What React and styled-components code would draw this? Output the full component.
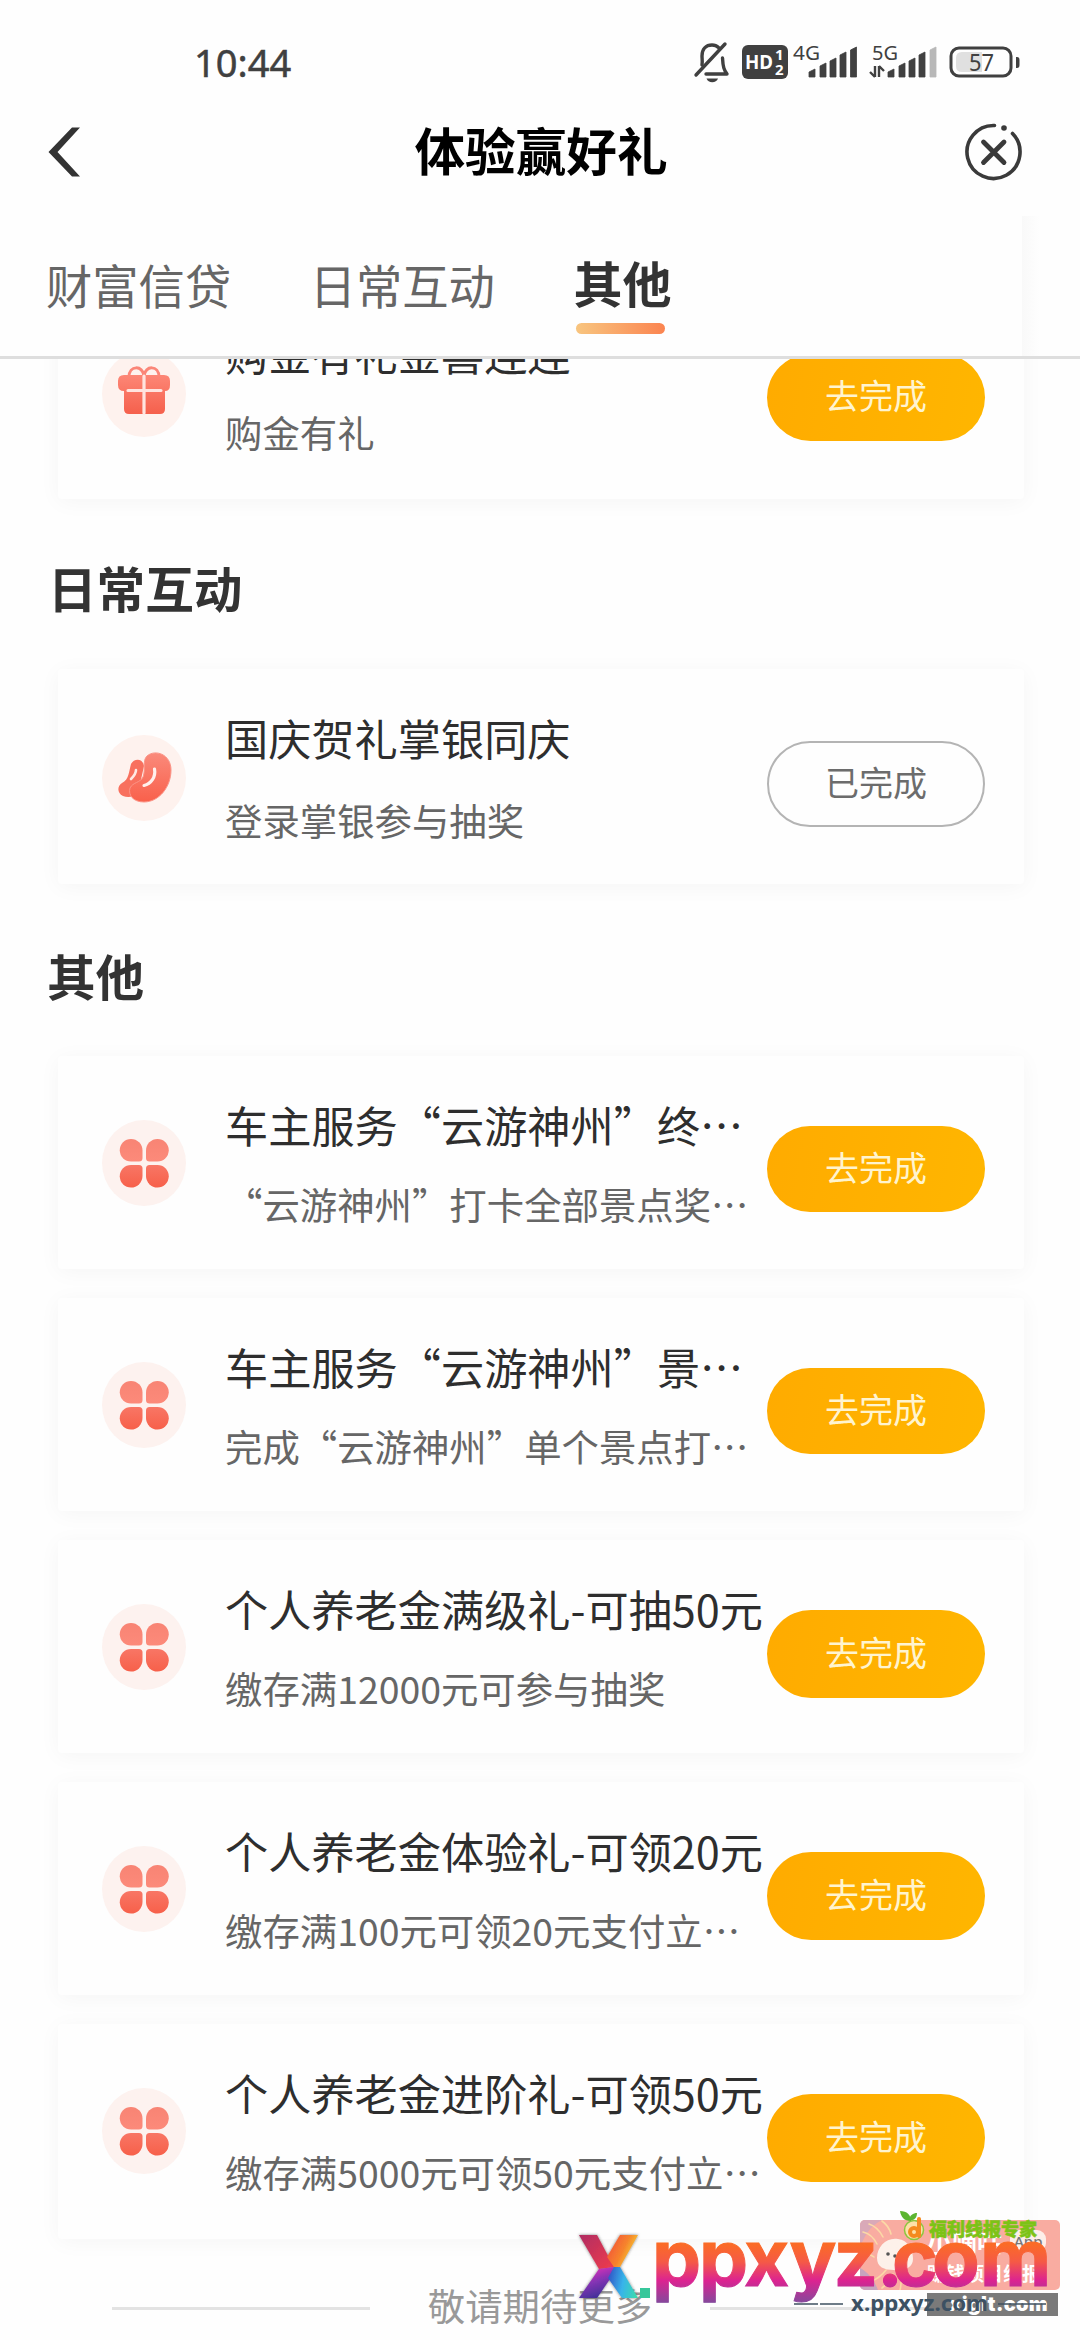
import React from "react";
import styled, { createGlobalStyle } from "styled-components";

const GlobalStyle = createGlobalStyle`
  * { box-sizing: border-box; }
  html, body { margin: 0; padding: 0; background: #fefefe; }
  body {
    font-family: "Noto Sans CJK SC", "Noto Sans", sans-serif;
    color: #333;
  }
`;

const Screen = styled.div`
  position: relative;
  display: flex;
  flex-direction: column;
  width: 1080px;
  height: 2340px;
  overflow: hidden;
  background: #fefefe;
`;

/* ---------- status bar ---------- */

const StatusBar = styled.div`
  display: flex;
  align-items: center;
  justify-content: space-between;
  height: 124px;
  padding: 0 60px 0 194px;
  flex: none;
`;

const Clock = styled.span`
  font: 400 38px/50px "Noto Sans", sans-serif;
  color: #404040;
  -webkit-text-stroke: 0.5px #404040;
`;

const StatusIcons = styled.div`
  display: flex;
  align-items: center;
`;

const StatusSvg = styled.svg`
  display: block;
  overflow: visible;
  font-family: "Noto Sans", sans-serif;
`;

/* ---------- title bar ---------- */

const NavBar = styled.header`
  display: grid;
  grid-template-columns: 60px 1fr 60px;
  align-items: center;
  height: 58px;
  padding: 0 56px 0 47px;
  flex: none;
`;

const NavTitle = styled.h1`
  margin: -8px 0 0;
  padding-left: 11px;
  text-align: center;
  font-size: 50.6px;
  line-height: 58px;
  font-weight: 700;
  color: #000;
`;

const NavIcon = styled.svg`
  display: block;
  margin-top: -2px;
  justify-self: ${(p) => p.$side};
`;

/* ---------- tabs ---------- */

const Tabs = styled.nav`
  display: flex;
  gap: 78.5px;
  height: 177px;
  padding: 66px 0 0 46px;
  flex: none;
  border-bottom: 3px solid #dedede;
  background: linear-gradient(90deg, #f9f9f9, #fefefe) 1022px 34px / 18px 144px no-repeat, #fefefe;
`;

const Tab = styled.div`
  display: flex;
  flex-direction: column;
  align-items: center;
  font-size: ${(p) => (p.$active ? "49px" : "46.3px")};
  font-weight: ${(p) => (p.$active ? 700 : 400)};
  line-height: ${(p) => (p.$active ? "68px" : "72px")};
  color: ${(p) => (p.$active ? "#333" : "#666")};
  white-space: nowrap;
`;

const TabMark = styled.span`
  width: 89px;
  height: 11px;
  margin: 7px 4px 0 0;
  border-radius: 6px;
  background: linear-gradient(90deg, #f8c57f, #fb8450);
`;

/* ---------- task list ---------- */

const Content = styled.main`
  flex: 1;
  min-height: 0;
  overflow: hidden;
`;

const List = styled.div`
  display: flex;
  flex-direction: column;
  gap: 29px;
  padding: 0 56px 0 58px;
  margin-top: ${(p) => p.$offset || 0}px;
`;

const SectionTitle = styled.h2`
  margin: 0;
  padding: ${(p) => p.$pad};
  font-size: 48.6px;
  line-height: 70px;
  font-weight: 700;
  color: #333;
`;

const Card = styled.section`
  display: flex;
  align-items: flex-start;
  height: ${(p) => p.$height || 213}px;
  padding: 0 39px 0 44px;
  border-radius: 4px;
  background: #fefefe;
  box-shadow: 0 3px 22px rgba(0, 0, 0, 0.04);
`;

const TaskIcon = styled.svg`
  display: block;
  flex: none;
  width: 84px;
  height: 86px;
  margin-top: ${(p) => p.$top}px;
`;

const TaskText = styled.div`
  flex: 1;
  min-width: 0;
  padding: 38px 0 0 39px;
  white-space: nowrap;
`;

const TaskTitle = styled.div`
  font-size: 43.2px;
  line-height: 60px;
  color: #2e2e2e;
`;

const TaskDesc = styled.div`
  margin-top: ${(p) => p.$gap}px;
  font-size: 37.4px;
  line-height: 50px;
  color: #666;
`;

const TaskButton = styled.button`
  flex: none;
  width: 218px;
  height: ${(p) => p.$height}px;
  margin: ${(p) => (p.$done ? 72 : 70)}px 0 0;
  padding: 0 0 5px;
  border: ${(p) => (p.$done ? "2px solid #b4b4b4" : "0")};
  border-radius: 44px;
  background: ${(p) => (p.$done ? "#fefefe" : "linear-gradient(100deg, #ffab00, #ffb600)")};
  color: ${(p) => (p.$done ? "#6c6c6c" : "#fff4cf")};
  font: 400 34px/44px "Noto Sans CJK SC", sans-serif;
`;

const Footer = styled.div`
  display: flex;
  align-items: center;
  justify-content: center;
  gap: 58px;
  height: 50px;
  margin-top: 41px;
  font-size: 37.4px;
  line-height: 50px;
  color: #999;
`;

const Rule = styled.span`
  width: 258px;
  height: 3px;
  margin-top: 6px;
  background: #e3e3e3;
`;

/* ---------- watermark laid over the page ---------- */

const Overlay = styled.div`
  position: absolute;
  left: 570px;
  top: 2205px;
  width: 500px;
  height: 120px;
`;

const Sticker = styled.div`
  position: absolute;
  left: 290px;
  top: 15px;
  display: flex;
  width: 200px;
  height: 70px;
  border-radius: 5px;
  overflow: hidden;
  background: #f9aca1;
`;

const StickerText = styled.div`
  display: flex;
  flex-direction: column;
  gap: 3px;
  padding-top: 4px;
  color: #fff;
  font-weight: 700;
  white-space: nowrap;
`;

const StickerTop = styled.div`
  display: flex;
  align-items: center;
  gap: 8px;
  font-size: 25px;
  line-height: 34px;
`;

const StickerPill = styled.span`
  padding: 0 4px;
  border-radius: 9px;
  background: #fdeee9;
  color: #777;
  font: 500 15px/22px "Noto Sans", sans-serif;
`;

const StickerLine = styled.div`
  font-size: 19px;
  line-height: 24px;
`;

const SiteStrip = styled.div`
  position: absolute;
  left: 357px;
  top: 88px;
  width: 131px;
  height: 23px;
  padding-right: 10px;
  background: #7a7a7a;
  color: #fff;
  text-align: right;
  font: 900 20px/22px "Inter", sans-serif;
  letter-spacing: 0.3px;
`;

const Wordmark = styled.svg`
  position: absolute;
  left: 0;
  top: 0;
`;

/* ---------- icons ---------- */

const bar = (x, top, fill = "#404040") => (
  <path key={x} d={`M${x} 36V${top + 3}L${x + 6} ${top}V36Z`} fill={fill} stroke={fill} strokeWidth="0.8" strokeLinejoin="round" />
);

function StatusGlyphs() {
  return (
    <StatusSvg width="326" height="42" viewBox="0 0 326 42" fill="none">
      {/* muted bell */}
      <g stroke="#404040" strokeWidth="3.4" strokeLinecap="round" strokeLinejoin="round">
        <path d="M8 24C8.600 20 8 18 8 15C8 8 12 4 18 4C20.500 4 23 5 24.500 6.500" />
        <path d="M12 33H33C30 29 29 26 28.500 17" />
        <path d="M31 3L2 34" />
      </g>
      <path d="M12.500 37.500H24C23 40 21 41.200 18.200 41.200C15.500 41.200 13.500 40 12.500 37.500Z" fill="#404040" />
      {/* HD voice */}
      <rect x="48" y="4" width="46" height="34" rx="6" fill="#404040" />
      <text x="51" y="28" fontSize="20" fontWeight="700" fill="#fff" textLength="28" lengthAdjust="spacingAndGlyphs">HD</text>
      <text x="81" y="19" fontSize="15" fontWeight="700" fill="#fff">1</text>
      <text x="81" y="34" fontSize="15" fontWeight="700" fill="#fff">2</text>
      {/* first SIM */}
      <text x="99" y="19" fontSize="20" fill="#404040" textLength="27" lengthAdjust="spacingAndGlyphs">4G</text>
      {bar(115, 28)}{bar(126, 22)}{bar(136, 17)}{bar(146, 11)}{bar(156.5, 6)}
      {/* second SIM */}
      <text x="178" y="19" fontSize="20" fill="#404040" textLength="26" lengthAdjust="spacingAndGlyphs">5G</text>
      <path d="M181 25V36M181 36L176 31M185 25V36M185 25L190 30" stroke="#404040" strokeWidth="2.400" />
      {bar(194, 28)}{bar(205, 22)}{bar(215, 17)}{bar(225, 11)}{bar(236, 6, "#b8b8b8")}
      {/* battery */}
      <rect x="257" y="7" width="60" height="28" rx="8" stroke="#404040" strokeWidth="3" />
      <path d="M268 11H288V31H268Q262 31 262 25V17Q262 11 268 11Z" fill="#e0e0e0" />
      <path d="M322 16h1q2.500 0 2.500 3v5q0 3-2.500 3h-1z" fill="#404040" />
      <text x="275" y="29.500" fontSize="23" fill="#404040" textLength="25" lengthAdjust="spacingAndGlyphs">57</text>
    </StatusSvg>
  );
}

function GiftIcon({ top }) {
  return (
    <TaskIcon $top={top} viewBox="0 0 84 86">
      <defs>
        <linearGradient id="gift" x1="0" y1="0" x2="0" y2="1">
          <stop offset="0" stopColor="#fd8676" /><stop offset="1" stopColor="#f5604c" />
        </linearGradient>
      </defs>
      <ellipse cx="42" cy="43" rx="42" ry="43" fill="#fef2ee" />
      <path d="M27 26C27 14 41 14 42 25C43 14 57 14 57 26" fill="none" stroke="#fb8678" strokeWidth="3" />
      <path d="M22 24H62Q68 24 68 30V34Q68 40 63 40V58Q63 63 58 63H27Q22 63 22 58V40Q16 40 16 34V30Q16 24 22 24Z" fill="url(#gift)" />
      <path d="M26 39.500H59M42 25V62" stroke="#ffe4df" strokeWidth="3.200" strokeLinecap="round" />
    </TaskIcon>
  );
}

function BeansIcon({ top }) {
  return (
    <TaskIcon $top={top} viewBox="0 0 84 86">
      <defs>
        <linearGradient id="bean" x1="0" y1="0" x2="0" y2="1">
          <stop offset="0" stopColor="#fa8a7b" /><stop offset="1" stopColor="#f9604b" />
        </linearGradient>
      </defs>
      <ellipse cx="42" cy="43" rx="42" ry="43" fill="#fef2ee" />
      <path d="M29 29C32 23 41 23 42 31L36 58C32 62 26 63 21 61C15 58 15 51 20 48C27 45 27 36 29 29Z" fill="#f8705e" />
      <path d="M29 44C32 41 34 39 34 35" fill="none" stroke="#ffe9e4" strokeWidth="2.600" strokeLinecap="round" />
      <path d="M45 21C53 14 69 19 69 35C69 52 57 67 42 67C31 67 26 60 28 53C31 47 38 48 41 42C44 34 40 26 45 21Z" fill="url(#bean)" stroke="#fb9487" strokeWidth="1" />
      <path d="M42 50.500C49 49 54 42 52.500 34" fill="none" stroke="#fff0ec" strokeWidth="3.200" strokeLinecap="round" />
    </TaskIcon>
  );
}

function CloverIcon({ top }) {
  return (
    <TaskIcon $top={top} viewBox="0 0 84 86">
      <defs>
        <linearGradient id="leafTop" x1="0" y1="0" x2="0" y2="1">
          <stop offset="0" stopColor="#f88474" /><stop offset="1" stopColor="#fc8a7a" />
        </linearGradient>
        <linearGradient id="leafBottom" x1="0" y1="0" x2="0" y2="1">
          <stop offset="0" stopColor="#f87665" /><stop offset="1" stopColor="#f7604a" />
        </linearGradient>
      </defs>
      <ellipse cx="42" cy="43" rx="42" ry="43" fill="#fdf2ef" />
      <path d="M29 19A11.500 11.500 0 0 1 40.500 30.500V38Q40.500 41.500 37 41.500H29A11.250 11.250 0 0 1 29 19Z" fill="url(#leafTop)" />
      <path d="M55.500 19A11.500 11.500 0 0 0 44 30.500V38Q44 41.500 47.500 41.500H55.500A11.250 11.250 0 0 0 55.500 19Z" fill="url(#leafTop)" />
      <path d="M29 67.500A11.500 11.500 0 0 0 40.500 56V48.500Q40.500 45 37 45H29A11.250 11.250 0 0 0 29 67.500Z" fill="url(#leafBottom)" />
      <path d="M55.500 67.500A11.500 11.500 0 0 1 44 56V48.500Q44 45 47.500 45H55.500A11.250 11.250 0 0 1 55.500 67.500Z" fill="url(#leafBottom)" />
    </TaskIcon>
  );
}

const ICONS = { gift: GiftIcon, beans: BeansIcon, clover: CloverIcon };

function Task({ icon, title, desc, done, height, gap = 25, iconTop = 64, buttonHeight = 86 }) {
  const Icon = ICONS[icon];
  return (
    <Card $height={height}>
      <Icon top={iconTop} />
      <TaskText>
        <TaskTitle>{title}</TaskTitle>
        <TaskDesc $gap={gap}>{desc}</TaskDesc>
      </TaskText>
      <TaskButton $done={done} $height={buttonHeight}>{done ? "已完成" : "去完成"}</TaskButton>
    </Card>
  );
}

const OTHER_TASKS = [
  { title: "车主服务“云游神州”终…", desc: "“云游神州”打卡全部景点奖…" },
  { title: "车主服务“云游神州”景…", desc: "完成“云游神州”单个景点打…" },
  { title: "个人养老金满级礼-可抽50元", desc: "缴存满12000元可参与抽奖", buttonHeight: 88 },
  { title: "个人养老金体验礼-可领20元", desc: "缴存满100元可领20元支付立…", buttonHeight: 88 },
  { title: "个人养老金进阶礼-可领50元", desc: "缴存满5000元可领50元支付立…", buttonHeight: 88, height: 215 },
];

function Watermark() {
  return (
    <Overlay>
      <Sticker>
        <svg width="67" height="70" viewBox="0 0 67 70" fill="none">
          <path d="M0 0H22C10 6 4 16 0 28Z" fill="#d9a9b8" />
          <path d="M0 48C8 52 14 60 18 70H0Z" fill="#c8a4be" />
          <path d="M3 12Q12 14 17 24M9 4Q18 7 23 17M22 1Q29 6 31 14M2 34Q9 33 14 37M10 62Q20 58 26 50M22 68Q30 62 33 54M40 70Q42 62 40 56" stroke="#fbd9a6" strokeWidth="1.6" strokeLinecap="round" />
          <path d="M17 38C17 26 27 17 38 19C48 20 53 30 53 39C53 48 44 51 34 50C24 50 17 47 17 38Z" fill="#fdf1ea" />
          <circle cx="28" cy="34" r="1.800" fill="#555" /><circle cx="35" cy="36" r="1.800" fill="#555" />
        </svg>
        <StickerText>
          <StickerTop>小嘀咕<StickerPill>App</StickerPill></StickerTop>
          <StickerLine>赚钱项目线报</StickerLine>
        </StickerText>
      </Sticker>
      <SiteStrip>xiglt.com</SiteStrip>
      <Wordmark width="500" height="120" viewBox="0 0 500 120">
        <defs>
          <linearGradient id="word" gradientUnits="userSpaceOnUse" x1="0" y1="39" x2="0" y2="98">
            <stop offset="0" stopColor="#fb6b26" />
            <stop offset="0.300" stopColor="#f55a45" />
            <stop offset="0.620" stopColor="#dc2391" />
            <stop offset="1" stopColor="#83499c" />
          </linearGradient>
          <linearGradient id="armA" x1="0" y1="0" x2="1" y2="1">
            <stop offset="0" stopColor="#b02c62" /><stop offset="1" stopColor="#f03c4c" />
          </linearGradient>
          <linearGradient id="armB" x1="0" y1="0" x2="1" y2="0.500">
            <stop offset="0" stopColor="#f2453c" /><stop offset="0.600" stopColor="#f6832c" /><stop offset="1" stopColor="#f5dc35" />
          </linearGradient>
          <linearGradient id="armC" x1="0.200" y1="0" x2="0.600" y2="1">
            <stop offset="0" stopColor="#f02cb8" /><stop offset="0.500" stopColor="#8434b4" /><stop offset="1" stopColor="#3b2e96" />
          </linearGradient>
          <linearGradient id="armD" x1="0" y1="0.400" x2="1" y2="0.600">
            <stop offset="0" stopColor="#3158c8" /><stop offset="0.500" stopColor="#37b4ea" /><stop offset="1" stopColor="#3bd9b0" />
          </linearGradient>
          <filter id="soft" x="-20%" y="-20%" width="140%" height="140%">
            <feDropShadow dx="0" dy="0" stdDeviation="1.600" floodColor="#333" floodOpacity="0.650" />
          </filter>
        </defs>
        <g filter="url(#soft)">
          <path d="M9 30H27L44 62L29 64Z" fill="url(#armA)" />
          <path d="M50 30H68L50 62L44 62L37 52Z" fill="url(#armB)" />
          <path d="M29 64L44 62L40 74L27 93H9Z" fill="url(#armC)" />
          <path d="M44 62L50 62L68 93H52L38 73Z" fill="url(#armD)" />
        </g>
        <rect x="70" y="83" width="10" height="10" fill="#37c79b" />
        <text
          x="82 129 174 219.500 263.500 307 322 362 410"
          y="81"
          fontFamily="Inter, sans-serif"
          fontWeight="700"
          fontSize="78"
          fill="url(#word)"
          stroke="url(#word)"
          strokeWidth="1"
        >ppxyz.com</text>
        <path d="M224 99H248M250 99H273M428 99H476" stroke="#3f5261" strokeWidth="1.600" />
        <text x="281" y="106" fontFamily="Noto Sans, sans-serif" fontWeight="700" fontSize="21.500" fill="#3c5163" textLength="137" lengthAdjust="spacingAndGlyphs">x.ppxyz.com</text>
        {/* fruit badge */}
        <circle cx="344" cy="25" r="9.500" fill="#fde0a8" stroke="#8cc63f" strokeWidth="1.500" />
        <circle cx="344" cy="27" r="4" fill="none" stroke="#f58a1f" strokeWidth="4" />
        <path d="M349 14V31" stroke="#f58a1f" strokeWidth="4" strokeLinecap="round" />
        <path d="M330 6C337 6 341 10 341 16C334 16 331 12 330 6ZM339 15C340 10 343 8 347 8C347 13 344 16 339 15Z" fill="#5cb531" />
        <text x="359" y="31" fontFamily="Noto Sans CJK SC, sans-serif" fontWeight="900" fontSize="18" fill="#7cc316" stroke="#7cc316" strokeWidth="0.500">福利线报专家</text>
      </Wordmark>
    </Overlay>
  );
}

export default function App() {
  return (
    <Screen>
      <GlobalStyle />
      <StatusBar>
        <Clock>10:44</Clock>
        <StatusIcons><StatusGlyphs /></StatusIcons>
      </StatusBar>
      <NavBar>
        <NavIcon $side="start" width="36" height="52" viewBox="0 0 36 52">
          <path d="M25 1.500H33L10.500 26L33 50.500H25L1.500 26Z" fill="#333" />
        </NavIcon>
        <NavTitle>体验赢好礼</NavTitle>
        <NavIcon $side="end" width="60" height="60" viewBox="0 0 60 60" fill="none" stroke="#3a3a3a" strokeLinecap="round">
          <path d="M30.500 3.500A26.500 26.500 0 1 0 48.500 11.500" strokeWidth="3.600" />
          <circle cx="40" cy="6" r="2.800" fill="#3a3a3a" stroke="none" />
          <path d="M19.500 20L40 40.500M40 20L19.500 40.500" strokeWidth="4.800" />
        </NavIcon>
      </NavBar>
      <Tabs>
        <Tab>财富信贷</Tab>
        <Tab>日常互动</Tab>
        <Tab $active>其他<TabMark /></Tab>
      </Tabs>
      <Content>
        <List $offset={-75}>
          <Task icon="gift" height={215} gap={25} iconTop={67} buttonHeight={87} title="购金有礼金喜连连" desc="购金有礼" />
        </List>
        <SectionTitle $pad="53px 0 47px 48px">日常互动</SectionTitle>
        <List>
          <Task icon="beans" height={215} gap={28} iconTop={66} done title="国庆贺礼掌银同庆" desc="登录掌银参与抽奖" />
        </List>
        <SectionTitle $pad="56px 0 46px 47px">其他</SectionTitle>
        <List>
          {OTHER_TASKS.map((t) => <Task key={t.title} icon="clover" {...t} />)}
        </List>
        <Footer><Rule />敬请期待更多<Rule /></Footer>
      </Content>
      <Watermark />
    </Screen>
  );
}
